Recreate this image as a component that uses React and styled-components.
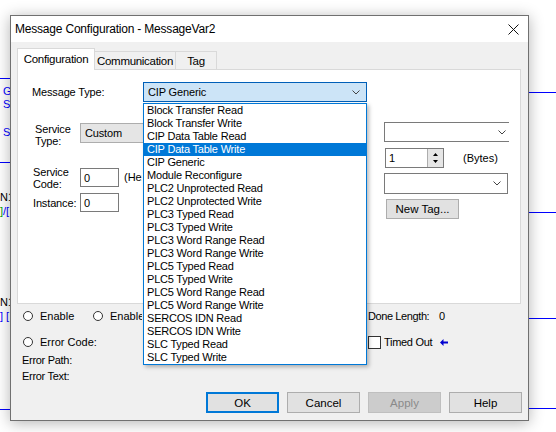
import styled, { createGlobalStyle } from "styled-components";

const GlobalStyle = createGlobalStyle`
  html, body { margin: 0; padding: 0; background: #fff; }
  body {
    font-family: "Liberation Sans", Arial, sans-serif;
    font-size: 11px;
    color: #000;
  }
  * { box-sizing: border-box; }
`;

const messageTypes = [
  "Block Transfer Read",
  "Block Transfer Write",
  "CIP Data Table Read",
  "CIP Data Table Write",
  "CIP Generic",
  "Module Reconfigure",
  "PLC2 Unprotected Read",
  "PLC2 Unprotected Write",
  "PLC3 Typed Read",
  "PLC3 Typed Write",
  "PLC3 Word Range Read",
  "PLC3 Word Range Write",
  "PLC5 Typed Read",
  "PLC5 Typed Write",
  "PLC5 Word Range Read",
  "PLC5 Word Range Write",
  "SERCOS IDN Read",
  "SERCOS IDN Write",
  "SLC Typed Read",
  "SLC Typed Write",
];

const Chevron = () => (
  <svg width="8" height="5" viewBox="0 0 8 5">
    <path d="M0.5 0.5 L4 4 L7.5 0.5" fill="none" stroke="#444" strokeWidth="1" />
  </svg>
);

const CloseIcon = () => (
  <svg width="11" height="11" viewBox="0 0 11 11">
    <path d="M0.5 0.5 L10.5 10.5 M10.5 0.5 L0.5 10.5" stroke="#111" strokeWidth="1" />
  </svg>
);

const BackArrow = () => (
  <svg width="8" height="7" viewBox="0 0 8 7">
    <path d="M0 3.5 L3.5 0 L3.5 2.5 L8 2.5 L8 4.5 L3.5 4.5 L3.5 7 Z" fill="#0000d0" />
  </svg>
);

const SpinArrows = () => (
  <svg width="7" height="14" viewBox="0 0 7 14">
    <path d="M3.5 2 L6 5 L1 5 Z M1 9 L6 9 L3.5 12 Z" fill="#000" />
  </svg>
);

const App = () => {
  return (
    <>
      <GlobalStyle />
      <Screen>
        {/* ladder editor behind the dialog */}
        <Rung $x={0} $y={78} $w={12} />
        <CanvasText $x={3} $y={85}>G</CanvasText>
        <CanvasText $x={3} $y={98}>S</CanvasText>
        <CanvasText $x={3} $y={126}>S</CanvasText>
        <Rung $x={0} $y={162} $w={12} />
        <CanvasText $x={0} $y={191} $color="#000">N1</CanvasText>
        <CanvasText $x={0} $y={205}>
          <Green>]</Green>/[
        </CanvasText>
        <CanvasText $x={0} $y={296} $color="#000">N1</CanvasText>
        <CanvasText $x={0} $y={310}>] [</CanvasText>
        <Rung $x={0} $y={409} $w={12} />
        <Rung $x={528} $y={92} $w={30} />
        <Rung $x={528} $y={212} $w={30} />
        <Rung $x={528} $y={318} $w={30} />
        <Rung $x={528} $y={408} $w={30} />

        <Dialog>
          <TitleBar>
            <span>Message Configuration - MessageVar2</span>
            <CloseIcon />
          </TitleBar>
          <Body>
            <TabStrip>
              <Tab $active $w={78}>Configuration</Tab>
              <Tab $w={82}>Communication</Tab>
              <Tab $w={42}>Tag</Tab>
            </TabStrip>

            <Panel>
              <TypeRow>
                <Label $w={111}>Message Type:</Label>
                <ComboWrap>
                  <Combo $w={224} $variant="focus">
                    <span>CIP Generic</span>
                    <Chevron />
                  </Combo>
                  <DropList>
                    {messageTypes.map((t) => (
                      <ListItem key={t} $selected={t === "CIP Data Table Write"}>
                        {t}
                      </ListItem>
                    ))}
                  </DropList>
                </ComboWrap>
              </TypeRow>

              <Fields>
                <LeftCol>
                  <FieldRow>
                    <StackLabel $ml={3} $w={45}>
                      Service
                      <br />
                      Type:
                    </StackLabel>
                    <Combo $w={170} $variant="readonly">
                      <span>Custom</span>
                      <Chevron />
                    </Combo>
                  </FieldRow>
                  <FieldRow $mt={19}>
                    <StackLabel $ml={1} $w={47}>
                      Service
                      <br />
                      Code:
                    </StackLabel>
                    <TextBox $mt={2}>0</TextBox>
                    <Hint>(Hex)</Hint>
                  </FieldRow>
                  <FieldRow $mt={3} $center>
                    <Label $w={47} $ml={1}>Instance:</Label>
                    <TextBox>0</TextBox>
                  </FieldRow>
                </LeftCol>

                <RightCol>
                  <Combo $w={125} $variant="edit" $open>
                    <span />
                    <Chevron />
                  </Combo>
                  <SpinRow>
                    <Spinner>
                      <span>1</span>
                      <SpinButtons>
                        <SpinArrows />
                      </SpinButtons>
                    </Spinner>
                    <span>(Bytes)</span>
                  </SpinRow>
                  <Combo $w={124} $h={21} $variant="edit" $mt={5}>
                    <span />
                    <Chevron />
                  </Combo>
                  <Button $w={73} $h={20} $mt={5} $ml={2}>New Tag...</Button>
                </RightCol>
              </Fields>
            </Panel>

            <Status>
              <StatusRow>
                <Cell>
                  <RadioOption $w={70}>
                    <Radio />
                    Enable
                  </RadioOption>
                  <RadioOption $clip={49}>
                    <Radio />
                    Enable Waiting
                  </RadioOption>
                </Cell>
                <Cell>
                  <DoneLabel>Done Length:</DoneLabel>
                  <span>0</span>
                </Cell>
              </StatusRow>
              <StatusRow $mt={10}>
                <Cell>
                  <RadioOption $w={120}>
                    <Radio />
                    Error Code:
                  </RadioOption>
                </Cell>
                <Cell>
                  <CheckBox />
                  <CheckText>Timed Out</CheckText>
                  <BackArrow />
                </Cell>
              </StatusRow>
              <StatusRow $mt={2}>
                <PlainCell>Error Path:</PlainCell>
              </StatusRow>
              <StatusRow>
                <PlainCell>Error Text:</PlainCell>
              </StatusRow>
            </Status>

            <ButtonRow>
              <Button $w={73} $h={21} $default>OK</Button>
              <Button $w={73} $h={21}>Cancel</Button>
              <Button $w={73} $h={21} disabled>Apply</Button>
              <Button $w={73} $h={21}>Help</Button>
            </ButtonRow>
          </Body>
        </Dialog>
      </Screen>
    </>
  );
};

const Screen = styled.div`
  position: relative;
  width: 556px;
  height: 432px;
  overflow: hidden;
  background: #fff;
`;

const Rung = styled.div`
  position: absolute;
  left: ${(p) => p.$x}px;
  top: ${(p) => p.$y}px;
  width: ${(p) => p.$w}px;
  height: 1px;
  background: #0000ff;
`;

const CanvasText = styled.span`
  position: absolute;
  left: ${(p) => p.$x}px;
  top: ${(p) => p.$y}px;
  font-size: 11px;
  line-height: 12px;
  color: ${(p) => p.$color || "#0000ff"};
  white-space: pre;
`;

const Green = styled.span`
  color: #00a000;
`;

const Dialog = styled.div`
  position: absolute;
  left: 10px;
  top: 15px;
  width: 519px;
  height: 406px;
  border: 1px solid #707070;
  background: #f0f0f0;
  box-shadow: 0 2px 14px rgba(0, 0, 0, 0.3);
  display: flex;
  flex-direction: column;
`;

const TitleBar = styled.div`
  height: 26px;
  flex: none;
  background: #fff;
  display: flex;
  align-items: center;
  justify-content: space-between;
  padding: 0 9px 0 4px;
  font-size: 12px;
  letter-spacing: -0.2px;
`;

const Body = styled.div`
  flex: 1;
  display: flex;
  flex-direction: column;
  padding: 6px 6px 7px;
`;

const TabStrip = styled.div`
  position: relative;
  z-index: 3;
  display: flex;
  align-items: flex-end;
  height: 21px;
`;

const Tab = styled.div`
  width: ${(p) => p.$w}px;
  height: ${(p) => (p.$active ? 22 : 18)}px;
  margin-bottom: ${(p) => (p.$active ? -1 : 0)}px;
  margin-left: ${(p) => (p.$active ? 0 : -1)}px;
  border: 1px solid #d9d9d9;
  border-bottom: none;
  background: ${(p) => (p.$active ? "#fff" : "#f0f0f0")};
  display: flex;
  align-items: center;
  justify-content: center;
  padding-bottom: ${(p) => (p.$active ? 2 : 0)}px;
  font-size: 11.5px;
  letter-spacing: -0.3px;
  &:first-child {
    margin-left: 0;
  }
`;

const Panel = styled.div`
  position: relative;
  z-index: 2;
  width: 504px;
  height: 235px;
  flex: none;
  background: #fff;
  border: 1px solid #d9d9d9;
  padding: 12px 0 0 14px;
`;

const TypeRow = styled.div`
  display: flex;
  align-items: center;
  height: 20px;
`;

const Label = styled.span`
  width: ${(p) => p.$w}px;
  margin-left: ${(p) => p.$ml || 0}px;
  flex: none;
  letter-spacing: -0.15px;
`;

const StackLabel = styled.span`
  width: ${(p) => p.$w}px;
  margin-left: ${(p) => p.$ml || 0}px;
  flex: none;
  line-height: 12px;
  letter-spacing: -0.15px;
`;

const ComboWrap = styled.div`
  position: relative;
`;

const comboColors = {
  focus: { bg: "#cce4f7", border: "#005fb8" },
  readonly: { bg: "#e5e5e5", border: "#adadad" },
  edit: { bg: "#fff", border: "#7a7a7a" },
};

const Combo = styled.div`
  width: ${(p) => p.$w}px;
  height: ${(p) => p.$h || 20}px;
  margin-top: ${(p) => p.$mt || 0}px;
  flex: none;
  display: flex;
  align-items: center;
  justify-content: space-between;
  padding: 0 ${(p) => (p.$open ? 3 : 6)}px 0 4px;
  background: ${(p) => comboColors[p.$variant].bg};
  border: 1px solid ${(p) => comboColors[p.$variant].border};
  border-right: ${(p) => (p.$open ? "none" : `1px solid ${comboColors[p.$variant].border}`)};
  letter-spacing: -0.15px;
`;

const DropList = styled.div`
  position: absolute;
  z-index: 10;
  left: 0;
  top: 21px;
  width: 224px;
  background: #fff;
  border: 1px solid #0078d7;
  box-shadow: 2px 2px 4px rgba(0, 0, 0, 0.28);
`;

const ListItem = styled.div`
  height: 13px;
  line-height: 13px;
  padding-left: 3px;
  white-space: nowrap;
  letter-spacing: -0.2px;
  background: ${(p) => (p.$selected ? "#0078d7" : "transparent")};
  color: ${(p) => (p.$selected ? "#fff" : "#000")};
`;

const Fields = styled.div`
  display: flex;
  margin-top: 20px;
`;

const LeftCol = styled.div`
  width: 352px;
  flex: none;
  padding-top: 1px;
  display: flex;
  flex-direction: column;
`;

const FieldRow = styled.div`
  display: flex;
  align-items: ${(p) => (p.$center ? "center" : "flex-start")};
  margin-top: ${(p) => p.$mt || 0}px;
`;

const TextBox = styled.div`
  width: 39px;
  height: 19px;
  margin-top: ${(p) => p.$mt || 0}px;
  flex: none;
  background: #fff;
  border: 1px solid #7a7a7a;
  padding-left: 3px;
  display: flex;
  align-items: center;
`;

/* the dropped list covers the rest of this hint */
const Hint = styled.span`
  width: 18px;
  overflow: hidden;
  white-space: nowrap;
  margin: 5px 0 0 5px;
`;

const RightCol = styled.div`
  display: flex;
  flex-direction: column;
  align-items: flex-start;
`;

const SpinRow = styled.div`
  display: flex;
  align-items: center;
  gap: 19px;
  margin: 6px 0 0 1px;
`;

const Spinner = styled.div`
  width: 59px;
  height: 20px;
  background: #fff;
  border: 1px solid #7a7a7a;
  display: flex;
  align-items: center;
  justify-content: space-between;
  padding-left: 3px;
`;

const SpinButtons = styled.div`
  width: 16px;
  height: 18px;
  background: #e6e6e6;
  border-left: 1px solid #adadad;
  display: flex;
  align-items: center;
  justify-content: center;
`;

const Button = styled.button`
  width: ${(p) => p.$w}px;
  height: ${(p) => p.$h}px;
  margin: ${(p) => p.$mt || 0}px 0 0 ${(p) => p.$ml || 0}px;
  padding: 0;
  font-family: inherit;
  font-size: 11.5px;
  color: #000;
  background: #e1e1e1;
  border: ${(p) => (p.$default ? "2px solid #0078d7" : "1px solid #adadad")};
  &:disabled {
    background: #cccccc;
    border-color: #bfbfbf;
    color: #8a8a8a;
  }
`;

const Status = styled.div`
  height: 88px;
  flex: none;
  padding-top: 4px;
`;

const StatusRow = styled.div`
  display: grid;
  grid-template-columns: 351px 1fr;
  height: 16px;
  align-items: center;
  margin-top: ${(p) => p.$mt || 0}px;
`;

const Cell = styled.div`
  display: flex;
  align-items: center;
  white-space: nowrap;
`;

const PlainCell = styled.div`
  padding-left: 5px;
  letter-spacing: -0.3px;
`;

const RadioOption = styled.label`
  display: flex;
  align-items: center;
  gap: 7px;
  flex: none;
  overflow: hidden;
  margin-left: ${(p) => (p.$w ? 6 : 0)}px;
  width: ${(p) => p.$w || p.$clip}px;
`;

const Radio = styled.span`
  width: 10px;
  height: 10px;
  border: 1px solid #333;
  border-radius: 50%;
  background: #fff;
  flex: none;
`;

const DoneLabel = styled.span`
  width: 71px;
  letter-spacing: -0.4px;
`;

const CheckBox = styled.span`
  width: 13px;
  height: 13px;
  border: 1px solid #333;
  background: #fff;
  flex: none;
`;

const CheckText = styled.span`
  margin: 0 8px 0 3px;
  letter-spacing: -0.3px;
`;

const ButtonRow = styled.div`
  display: flex;
  justify-content: flex-end;
  gap: 8px;
  margin-top: auto;
`;

export default App;
